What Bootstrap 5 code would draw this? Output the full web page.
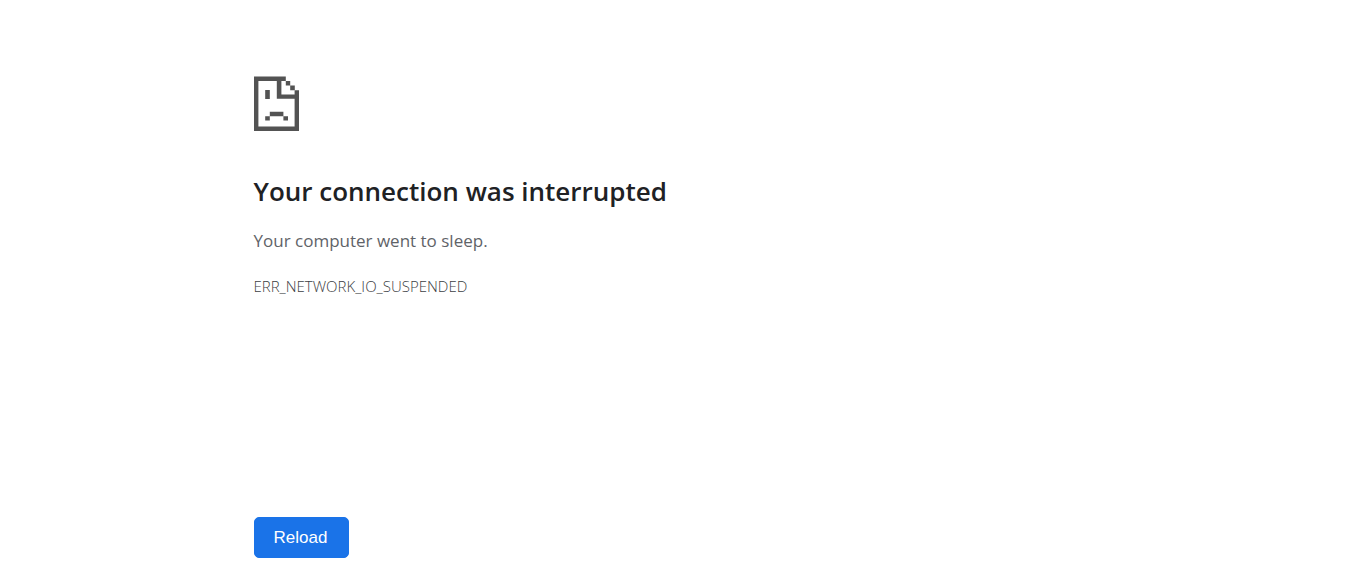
<!DOCTYPE html>
<html lang="en">
<head>
<meta charset="utf-8">
<meta name="viewport" content="width=device-width, initial-scale=1">
<title>Your connection was interrupted</title>
<link href="https://cdn.jsdelivr.net/npm/bootstrap@5.3.0/dist/css/bootstrap.min.css" rel="stylesheet">
<style>
body { font-family: "Open Sans", "Noto Sans", sans-serif; color: #5f6368; background: #fff; }
.error-page { max-width: 860px; padding-top: 77px; }
.error-icon { width: 45px; height: 54px; margin-bottom: 42px; fill: #535353; overflow: visible; }
.error-title { font-size: 26px; line-height: 36px; font-weight: 600; color: #202124; margin-bottom: 18px; }
.error-text { font-size: 17px; line-height: 28px; margin-bottom: 20px; }
.error-code { font-size: 15px; line-height: 22px; font-weight: 300; color: #3c4043; margin-bottom: 220px; }
.reload-btn { font: 500 17px/25px "Liberation Sans", sans-serif; --bs-btn-bg: #1a73e8; --bs-btn-border-color: #1a73e8; padding: 7px 20px 7px 19px; border-radius: 5px; min-width: 95px; }
</style>
</head>
<body>
<main class="error-page mx-auto">
<svg class="error-icon d-block" viewBox="0 0 45 54" aria-hidden="true">
<path fill-rule="evenodd" d="M0 -.4H31.8V4H27.4V17.5H40.6V13.2H45V54H0ZM4.4 4V49.6H40.6V21.7H22.8V4Z"/>
<path d="M31.8 4h4.4v4.4h-4.4zM36.2 8.6h4.6v4.6h-4.6zM11.2 13h4.6v8.9h-4.6zM15.8 34.8h13.6v4.4h-13.6zM11.2 39.2h4.6v4.4h-4.6zM29.4 39.2h4.6v4.4h-4.6z"/>
</svg>
<h1 class="error-title">Your connection was interrupted</h1>
<p class="error-text">Your computer went to sleep.</p>
<p class="error-code">ERR_NETWORK_IO_SUSPENDED</p>
<button type="button" class="btn btn-primary reload-btn">Reload</button>
</main>
<script src="https://cdn.jsdelivr.net/npm/bootstrap@5.3.0/dist/js/bootstrap.bundle.min.js"></script>
</body>
</html>
